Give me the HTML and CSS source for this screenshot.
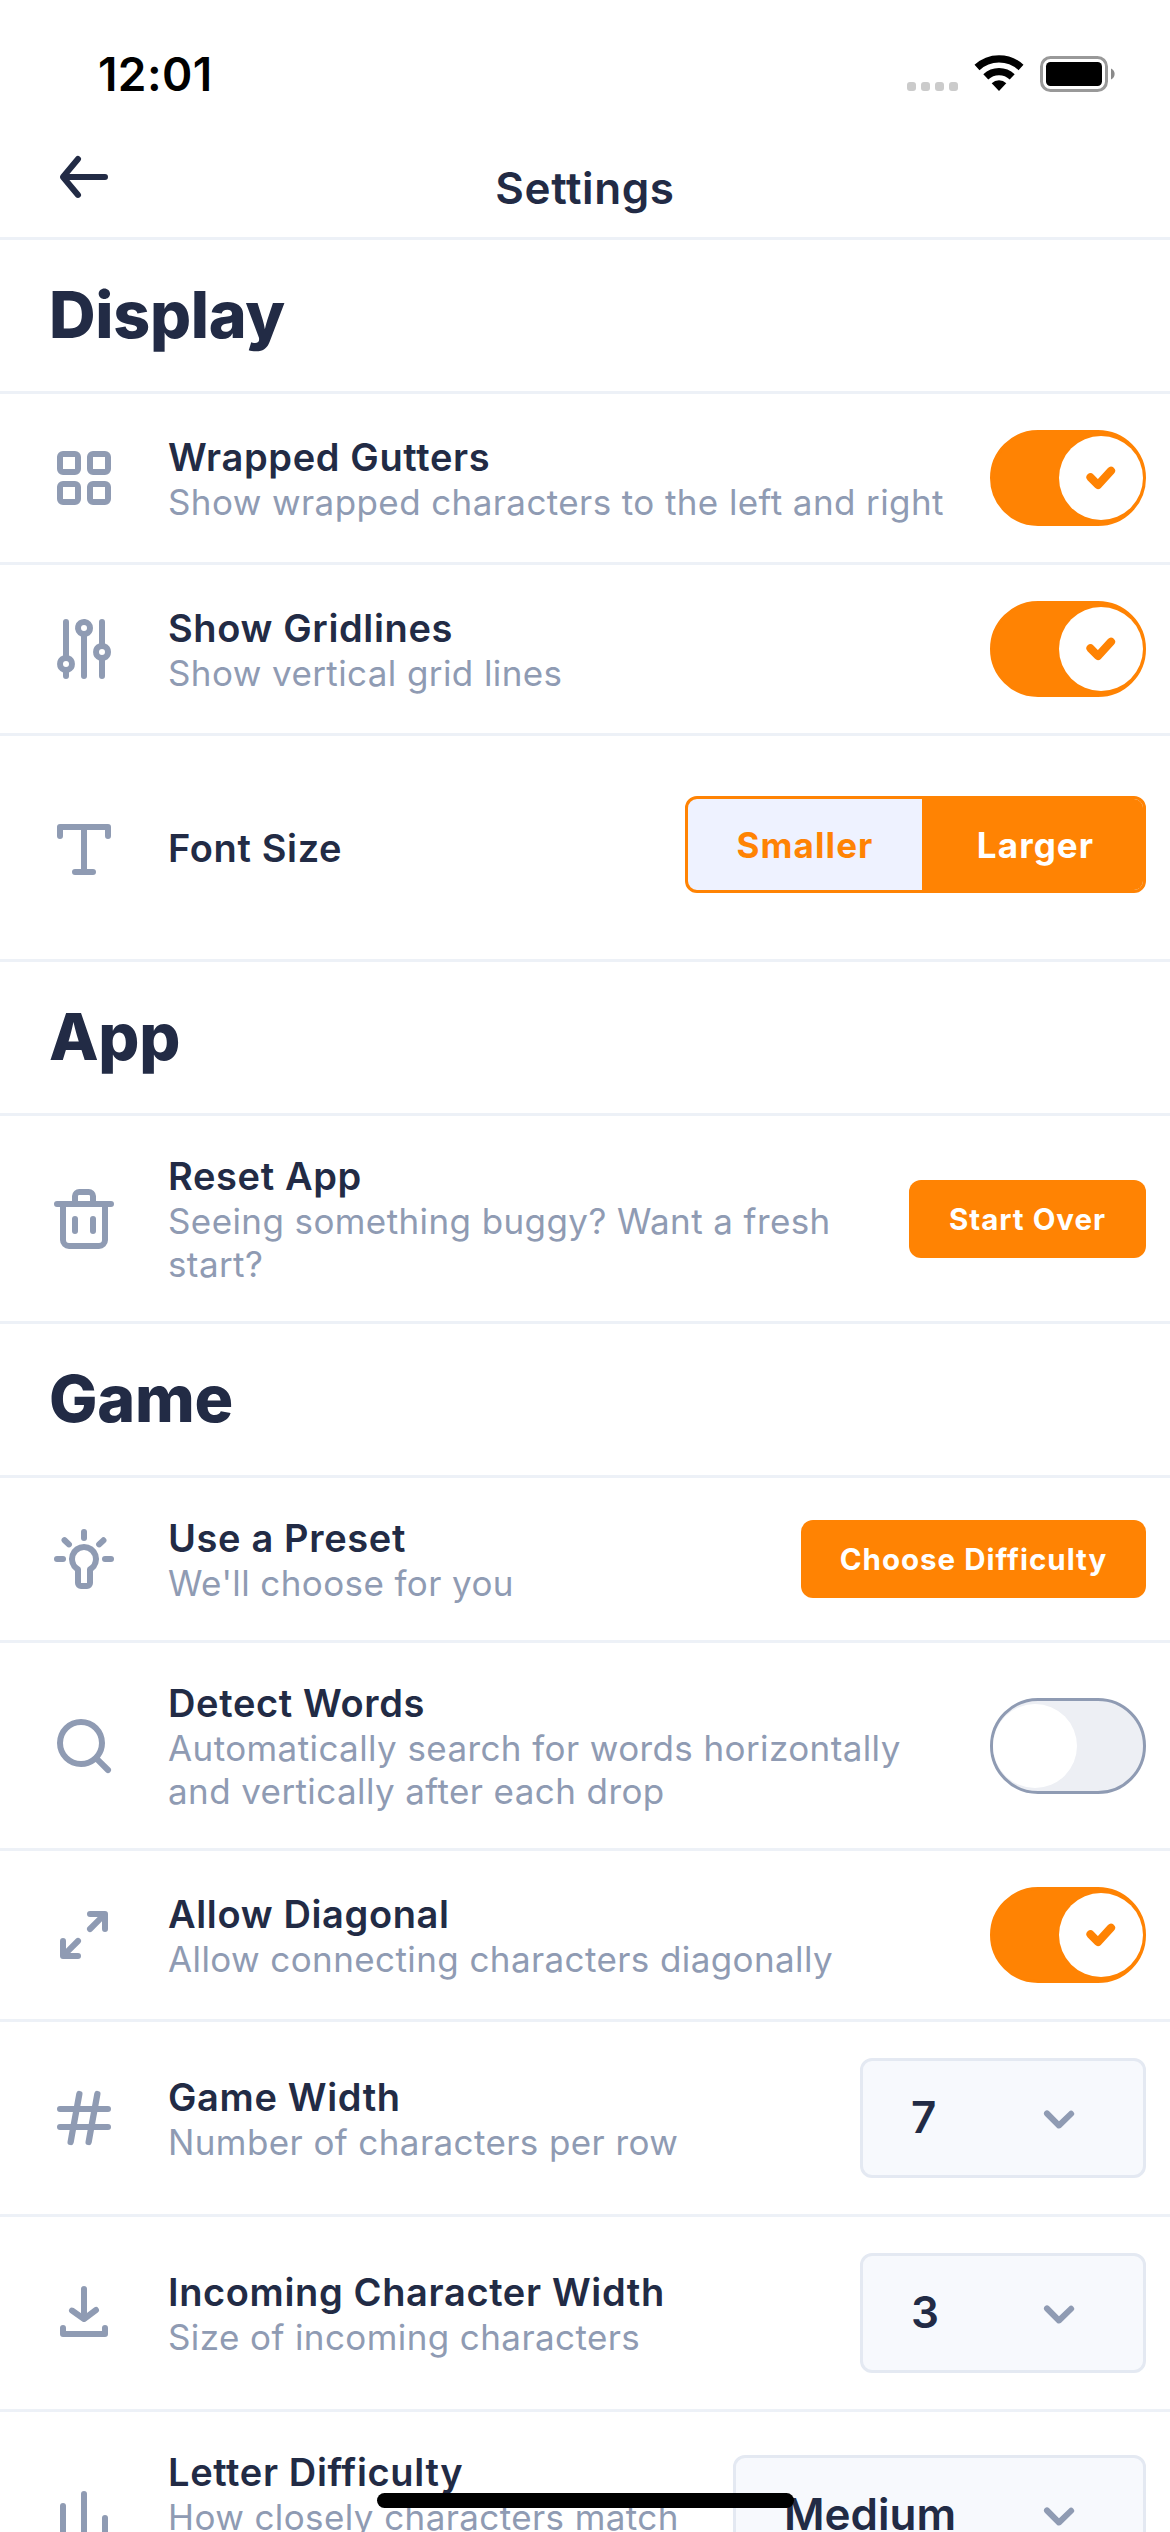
FILE: index.html
```html
<!DOCTYPE html>
<html lang="en">
<head>
<meta charset="utf-8">
<title>Settings</title>
<link rel="stylesheet" href="styles.css">
</head>
<body>
<div class="status-bar">
  <span class="time">12:01</span>
  <svg class="status-icons" viewBox="0 0 208 40">
    <g fill="#cbcbcb"><rect x="0" y="28" width="9" height="9" rx="3"/><rect x="14" y="28" width="9" height="9" rx="3"/><rect x="28" y="28" width="9" height="9" rx="3"/><rect x="42" y="28" width="9" height="9" rx="3"/></g>
    <g fill="none" stroke="#000" stroke-width="7.3"><path d="M70 13.5A32.2 32.2 0 0 1 114 13.5"/><path d="M78.8 22.9A19.3 19.3 0 0 1 105.2 22.9"/></g>
    <path d="M92 37L84.7 29.2A10.7 10.7 0 0 1 99.3 29.2Z"/>
    <rect x="134.5" y="3.5" width="65" height="33" rx="9" fill="none" stroke="#999" stroke-width="3"/>
    <rect x="139" y="8" width="56" height="24" rx="4.5"/>
    <path d="M204 14.5a6 6 0 0 1 0 11z" fill="#8a8a8a"/>
  </svg>
</div>

<header class="header">
  <svg class="icon back" viewBox="0 0 24 24"><path d="M19 11H7.14l3.63-4.36a1 1 0 1 0-1.54-1.28l-5 6a1.19 1.19 0 0 0-.09.15c0 .05 0 .08-.07.13A1 1 0 0 0 4 12a1 1 0 0 0 .07.36c0 .05 0 .08.07.13a1.19 1.19 0 0 0 .09.15l5 6A1 1 0 0 0 10 19a1 1 0 0 0 .64-.23 1 1 0 0 0 .13-1.41L7.14 13H19a1 1 0 0 0 0-2z"/></svg>
  <h1 class="title">Settings</h1>
</header>

<main>
  <h2 class="section">Display</h2>

  <div class="row">
    <svg class="icon" viewBox="0 0 24 24"><path fill-rule="evenodd" d="M9 3H5a2 2 0 0 0-2 2v4a2 2 0 0 0 2 2h4a2 2 0 0 0 2-2V5a2 2 0 0 0-2-2zM5 9V5h4v4zM19 3h-4a2 2 0 0 0-2 2v4a2 2 0 0 0 2 2h4a2 2 0 0 0 2-2V5a2 2 0 0 0-2-2zm-4 6V5h4v4zM9 13H5a2 2 0 0 0-2 2v4a2 2 0 0 0 2 2h4a2 2 0 0 0 2-2v-4a2 2 0 0 0-2-2zm-4 6v-4h4v4zM19 13h-4a2 2 0 0 0-2 2v4a2 2 0 0 0 2 2h4a2 2 0 0 0 2-2v-4a2 2 0 0 0-2-2zm-4 6v-4h4v4z"/></svg>
    <div class="text"><div class="name">Wrapped Gutters</div><div class="desc">Show wrapped characters to the left and right</div></div>
    <div class="toggle on"><div class="knob"><svg viewBox="0 0 84 84"><path d="M31.5 41.3L39 49L52 34.8"/></svg></div></div>
  </div>

  <div class="row">
    <svg class="icon" viewBox="0 0 24 24"><path d="M7 14.18V3a1 1 0 0 0-2 0v11.18a3 3 0 0 0 0 5.64V21a1 1 0 0 0 2 0v-1.18a3 3 0 0 0 0-5.64zM6 18a1 1 0 1 1 1-1 1 1 0 0 1-1 1z"/><path d="M21 13a3 3 0 0 0-2-2.82V3a1 1 0 0 0-2 0v7.18a3 3 0 0 0 0 5.64V21a1 1 0 0 0 2 0v-5.18A3 3 0 0 0 21 13zm-3 1a1 1 0 1 1 1-1 1 1 0 0 1-1 1z"/><path d="M15 5a3 3 0 1 0-4 2.82V21a1 1 0 0 0 2 0V7.82A3 3 0 0 0 15 5zm-3 1a1 1 0 1 1 1-1 1 1 0 0 1-1 1z"/></svg>
    <div class="text"><div class="name">Show Gridlines</div><div class="desc">Show vertical grid lines</div></div>
    <div class="toggle on"><div class="knob"><svg viewBox="0 0 84 84"><path d="M31.5 41.3L39 49L52 34.8"/></svg></div></div>
  </div>

  <div class="row">
    <svg class="icon" viewBox="0 0 24 24"><path d="M20 4H4a1 1 0 0 0-1 1v3a1 1 0 0 0 2 0V6h6v13H9a1 1 0 0 0 0 2h6a1 1 0 0 0 0-2h-2V6h6v2a1 1 0 0 0 2 0V5a1 1 0 0 0-1-1z"/></svg>
    <div class="text"><div class="name">Font Size</div></div>
    <div class="segmented"><div class="segment smaller">Smaller</div><div class="segment larger">Larger</div></div>
  </div>

  <h2 class="section">App</h2>

  <div class="row">
    <svg class="icon" viewBox="0 0 24 24"><path d="M21 6h-5V4.33A2.42 2.42 0 0 0 13.5 2h-3A2.42 2.42 0 0 0 8 4.33V6H3a1 1 0 0 0 0 2h1v11a3 3 0 0 0 3 3h10a3 3 0 0 0 3-3V8h1a1 1 0 0 0 0-2zM10 4.33c0-.16.21-.33.5-.33h3c.29 0 .5.17.5.33V6h-4zM18 19a1 1 0 0 1-1 1H7a1 1 0 0 1-1-1V8h12z"/><path d="M9 17a1 1 0 0 0 1-1v-4a1 1 0 0 0-2 0v4a1 1 0 0 0 1 1z"/><path d="M15 17a1 1 0 0 0 1-1v-4a1 1 0 0 0-2 0v4a1 1 0 0 0 1 1z"/></svg>
    <div class="text"><div class="name">Reset App</div><div class="desc">Seeing something buggy? Want a fresh<br>start?</div></div>
    <div class="button start-over">Start Over</div>
  </div>

  <h2 class="section">Game</h2>

  <div class="row">
    <svg class="icon" viewBox="0 0 24 24"><path d="M12 7a5 5 0 0 0-3 9v4a2 2 0 0 0 2 2h2a2 2 0 0 0 2-2v-4a5 5 0 0 0-3-9zm1.5 7.59a1 1 0 0 0-.5.87V20h-2v-4.54a1 1 0 0 0-.5-.87A3 3 0 0 1 9 12a3 3 0 0 1 6 0 3 3 0 0 1-1.5 2.59z"/><path d="M12 6a1 1 0 0 0 1-1V3a1 1 0 0 0-2 0v2a1 1 0 0 0 1 1z"/><path d="M21 11h-2a1 1 0 0 0 0 2h2a1 1 0 0 0 0-2z"/><path d="M5 11H3a1 1 0 0 0 0 2h2a1 1 0 0 0 0-2z"/><path d="M7.66 6.42L6.22 5a1 1 0 0 0-1.39 1.47l1.44 1.39a1 1 0 0 0 .73.28 1 1 0 0 0 .72-.31 1 1 0 0 0-.06-1.41z"/><path d="M19.19 5.05a1 1 0 0 0-1.41 0l-1.44 1.37a1 1 0 0 0 0 1.41 1 1 0 0 0 .72.31 1 1 0 0 0 .69-.28l1.44-1.39a1 1 0 0 0 0-1.42z"/></svg>
    <div class="text"><div class="name">Use a Preset</div><div class="desc">We'll choose for you</div></div>
    <div class="button choose">Choose Difficulty</div>
  </div>

  <div class="row">
    <svg class="icon" viewBox="0 0 24 24"><path d="M20.71 19.29l-3.4-3.39A7.92 7.92 0 0 0 19 11a8 8 0 1 0-8 8 7.92 7.92 0 0 0 4.9-1.69l3.39 3.4a1 1 0 0 0 1.42 0 1 1 0 0 0 0-1.42zM5 11a6 6 0 1 1 6 6 6 6 0 0 1-6-6z"/></svg>
    <div class="text"><div class="name">Detect Words</div><div class="desc">Automatically search for words horizontally<br>and vertically after each drop</div></div>
    <div class="toggle"><div class="knob"></div></div>
  </div>

  <div class="row">
    <svg class="icon" viewBox="0 0 24 24"><path d="M20 5a1 1 0 0 0-1-1h-5a1 1 0 0 0 0 2h2.57l-3.28 3.29a1 1 0 0 0 0 1.42 1 1 0 0 0 1.42 0L18 7.42V10a1 1 0 0 0 1 1 1 1 0 0 0 1-1z"/><path d="M10.71 13.29a1 1 0 0 0-1.42 0L6 16.57V14a1 1 0 0 0-1-1 1 1 0 0 0-1 1v5a1 1 0 0 0 1 1h5a1 1 0 0 0 0-2H7.42l3.29-3.29a1 1 0 0 0 0-1.42z"/></svg>
    <div class="text"><div class="name">Allow Diagonal</div><div class="desc">Allow connecting characters diagonally</div></div>
    <div class="toggle on"><div class="knob"><svg viewBox="0 0 84 84"><path d="M31.5 41.3L39 49L52 34.8"/></svg></div></div>
  </div>

  <div class="row">
    <svg class="icon" viewBox="0 0 24 24"><path d="M20 14h-4.3l.73-4H20a1 1 0 0 0 0-2h-3.21l.69-3.81A1 1 0 0 0 16.64 3a1 1 0 0 0-1.22.82L14.67 8h-3.88l.69-3.81A1 1 0 0 0 10.64 3a1 1 0 0 0-1.22.82L8.67 8H4a1 1 0 0 0 0 2h4.3l-.73 4H4a1 1 0 0 0 0 2h3.21l-.69 3.81A1 1 0 0 0 7.36 21a1 1 0 0 0 1.22-.82L9.33 16h3.88l-.69 3.81a1 1 0 0 0 .84 1.19 1 1 0 0 0 1.22-.82l.75-4.18H20a1 1 0 0 0 0-2zM9.7 14l.73-4h3.87l-.73 4z"/></svg>
    <div class="text"><div class="name">Game Width</div><div class="desc">Number of characters per row</div></div>
    <div class="select"><span>7</span><svg class="icon" viewBox="0 0 24 24"><path d="M12 15.5a1 1 0 0 1-.71-.29l-4-4a1 1 0 1 1 1.42-1.42L12 13.1l3.3-3.18a1 1 0 1 1 1.38 1.44l-4 3.86a1 1 0 0 1-.68.28z"/></svg></div>
  </div>

  <div class="row">
    <svg class="icon" viewBox="0 0 24 24"><path d="M5 16a1 1 0 0 0-1 1v2a1 1 0 0 0 1 1h14a1 1 0 0 0 1-1v-2a1 1 0 0 0-2 0v1H6v-1a1 1 0 0 0-1-1z"/><path d="M12 15a1 1 0 0 1-.58-.18l-4-2.82a1 1 0 0 1-.24-1.39 1 1 0 0 1 1.4-.24L12 12.76l3.4-2.56a1 1 0 0 1 1.2 1.6l-4 3a1 1 0 0 1-.6.2z"/><path d="M12 13a1 1 0 0 1-1-1V4a1 1 0 0 1 2 0v8a1 1 0 0 1-1 1z"/></svg>
    <div class="text"><div class="name">Incoming Character Width</div><div class="desc">Size of incoming characters</div></div>
    <div class="select"><span>3</span><svg class="icon" viewBox="0 0 24 24"><path d="M12 15.5a1 1 0 0 1-.71-.29l-4-4a1 1 0 1 1 1.42-1.42L12 13.1l3.3-3.18a1 1 0 1 1 1.38 1.44l-4 3.86a1 1 0 0 1-.68.28z"/></svg></div>
  </div>

  <div class="row">
    <svg class="icon" viewBox="0 0 24 24"><path d="M12 4a1 1 0 0 0-1 1v15a1 1 0 0 0 2 0V5a1 1 0 0 0-1-1z"/><path d="M19 12a1 1 0 0 0-1 1v7a1 1 0 0 0 2 0v-7a1 1 0 0 0-1-1z"/><path d="M5 8a1 1 0 0 0-1 1v11a1 1 0 0 0 2 0V9a1 1 0 0 0-1-1z"/></svg>
    <div class="text"><div class="name">Letter Difficulty</div><div class="desc two-line">How closely characters match</div></div>
    <div class="select wide"><span>Medium</span><svg class="icon" viewBox="0 0 24 24"><path d="M12 15.5a1 1 0 0 1-.71-.29l-4-4a1 1 0 1 1 1.42-1.42L12 13.1l3.3-3.18a1 1 0 1 1 1.38 1.44l-4 3.86a1 1 0 0 1-.68.28z"/></svg></div>
  </div>
</main>

<div class="home-indicator"></div>
</body>
</html>
```
FILE: styles.css
```css
* {
  box-sizing: border-box;
}

html,
body {
  margin: 0;
  height: 2532px;
  overflow: hidden;
}

body {
  width: 1170px;
  background: #fff;
  color: #222b45;
  font-family: Inter, "Liberation Sans", sans-serif;
}

.status-bar {
  display: flex;
  align-items: center;
  justify-content: space-between;
  height: 132px;
  padding: 16px 55px 0 98px;
}

.time {
  color: #000;
  font-size: 46px;
  font-weight: 600;
  letter-spacing: 0.4px;
}

.status-icons {
  display: block;
  width: 208px;
  height: 40px;
}

.header {
  display: grid;
  grid-template-columns: 120px 1fr 120px;
  align-items: center;
  height: 108px;
  border-bottom: 3px solid #edf1f7;
}

.icon {
  display: block;
  flex: none;
  width: 72px;
  height: 72px;
  fill: #8f9bb3;
}

.back {
  margin: 0 0 15px 48px;
  fill: #222b45;
}

.title {
  margin: 7px 0 0;
  text-align: center;
  font-size: 44px;
  font-weight: 600;
  letter-spacing: 0.6px;
  line-height: 54px;
}

.section {
  height: 154px;
  margin: 0;
  padding-left: 49px;
  border-bottom: 3px solid #edf1f7;
  font-size: 64.5px;
  font-weight: 800;
  letter-spacing: -0.3px;
  line-height: 151px;
}

.row {
  display: flex;
  align-items: center;
  padding: 36px 24px 36px 48px;
  border-bottom: 3px solid #edf1f7;
}

.text {
  flex: 1;
  margin: 1px 0 -1px 48px;
  white-space: nowrap;
}

.name {
  font-size: 38px;
  font-weight: 600;
  letter-spacing: 0.64px;
  line-height: 47px;
}

.desc {
  color: #8f9bb3;
  font-size: 35px;
  letter-spacing: 0.4px;
  line-height: 43px;
}

.two-line {
  min-height: 86px;
}

.toggle {
  display: flex;
  align-items: center;
  flex: none;
  width: 156px;
  height: 96px;
  border: 3px solid #8f9bb3;
  border-radius: 48px;
  background: #edeff4;
}

.knob {
  width: 84px;
  height: 84px;
  border-radius: 50%;
  background: #fff;
}

.on {
  justify-content: flex-end;
  border-color: #ff8303;
  background: #ff8303;
}

.knob svg {
  display: block;
  fill: none;
  stroke: #ff8303;
  stroke-width: 8.2;
  stroke-linecap: round;
  stroke-linejoin: round;
}

.segmented {
  display: flex;
  width: 461px;
  height: 97px;
  margin: 24px 0 30px;
  overflow: hidden;
  border: 3px solid #ff8303;
  border-radius: 12px;
  background: #eef2ff;
}

.segment {
  font-size: 35px;
  font-weight: 700;
  letter-spacing: 1.1px;
  line-height: 93px;
  text-align: center;
}

.smaller {
  width: 234px;
  color: #ff8303;
}

.larger {
  flex: 1;
  padding-left: 6px;
  background: #ff8303;
  color: #fff;
}

.button {
  height: 78px;
  border-radius: 12px;
  background: #ff8303;
  color: #fff;
  font-size: 29.5px;
  font-weight: 700;
  letter-spacing: 1px;
  line-height: 79px;
  text-align: center;
}

.start-over {
  width: 237px;
}

.choose {
  width: 345px;
}

.select {
  display: flex;
  align-items: center;
  justify-content: space-between;
  width: 286px;
  height: 120px;
  padding: 0 48px;
  border: 3px solid #e4e9f2;
  border-radius: 12px;
  background: #f7f9fd;
  font-size: 44px;
  font-weight: 600;
}

.select span {
  line-height: 54px;
  padding-bottom: 2px;
}

.wide {
  width: 413px;
}

.home-indicator {
  position: absolute;
  left: 377px;
  top: 2493px;
  width: 417px;
  height: 15px;
  border-radius: 8px;
  background: #000;
}
```
